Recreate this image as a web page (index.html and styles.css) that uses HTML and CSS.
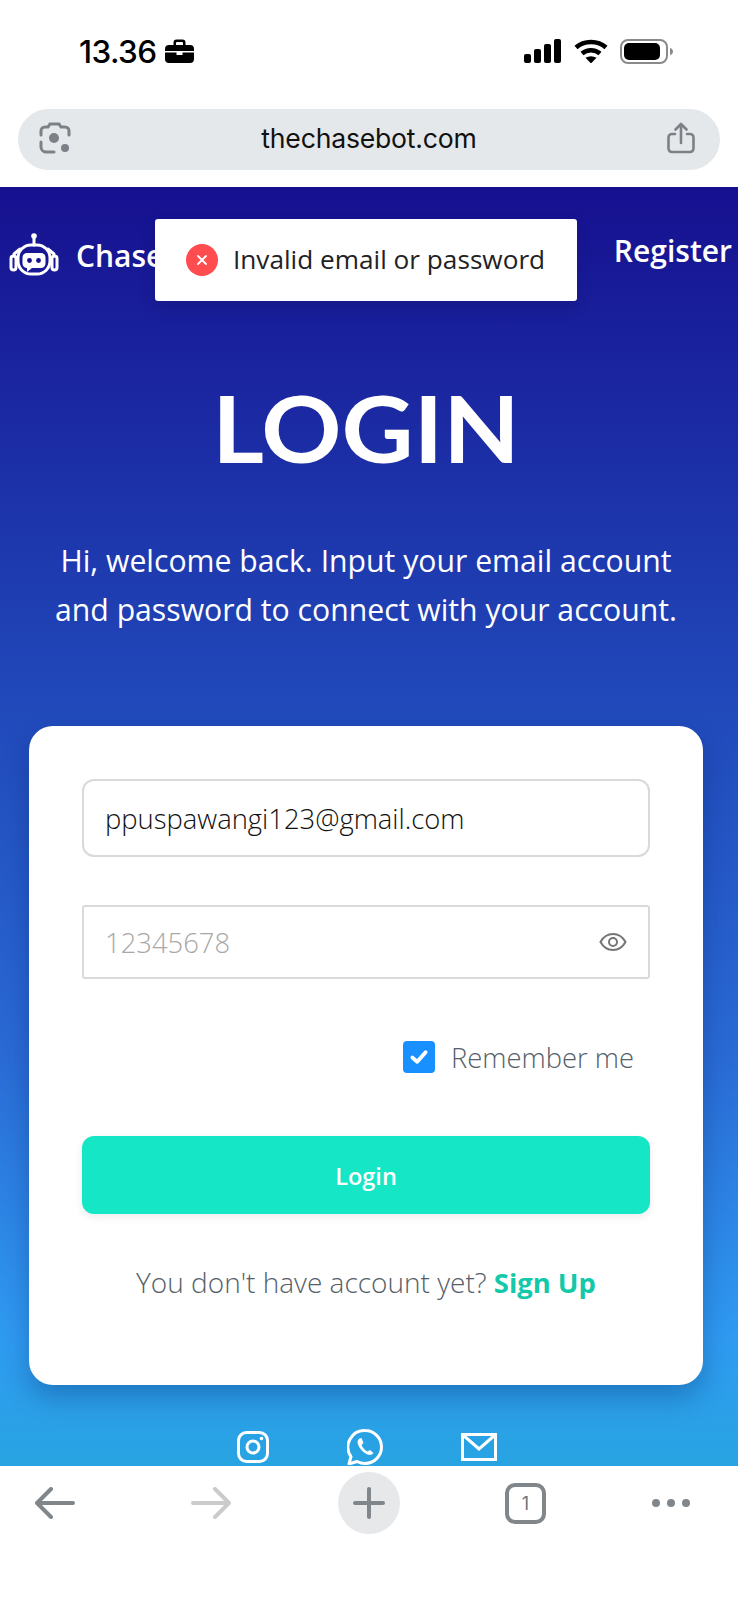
FILE: index.html
```html
<!DOCTYPE html>
<html lang="en">
<head>
<meta charset="utf-8">
<title>Login</title>
<link rel="stylesheet" href="styles.css">
</head>
<body>
<div class="phone">
  <header class="browser-top">
    <div class="status">
      <div class="status-left">
        <span class="time">13.36</span>
        <svg class="briefcase" viewBox="0 0 29 24"><path d="M8.500 6V3.500A3 3 0 0 1 11.500.5h6a3 3 0 0 1 3 3V6H25a4 4 0 0 1 4 4v2H0v-2a4 4 0 0 1 4-4zm2.500-2v2h7V4a1 1 0 0 0-1-1h-5a1 1 0 0 0-1 1zM0 13.500h11.500v2.500h6v-2.500H29V20a4 4 0 0 1-4 4H4a4 4 0 0 1-4-4z" fill="#000" fill-rule="evenodd"/></svg>
      </div>
      <div class="status-right">
        <svg class="signal" viewBox="0 0 37 24"><rect x="0" y="15" width="7" height="9" rx="2"/><rect x="10" y="10" width="7" height="14" rx="2"/><rect x="20" y="5" width="7" height="19" rx="2"/><rect x="30" y="0" width="7" height="24" rx="2"/></svg>
        <svg class="wifi" viewBox="0 0 34 24" fill="none" stroke="#000" stroke-width="4.500"><path d="M2 8.500C10 1 24 1 32 8.500"/><path d="M8 14.500C13 10 21 10 26 14.500"/><path d="M11.500 18.800C15 16.800 19 16.800 22.500 18.800L17 24.500z" fill="#000" stroke="none"/></svg>
        <svg class="battery" viewBox="0 0 53 25"><rect x="1" y="1" width="46" height="23" rx="7" fill="none" stroke="#8a8a8a" stroke-width="2"/><rect x="4" y="4" width="36" height="17" rx="5" fill="#000"/><path d="M50 9c2 .5 3 2 3 3.500s-1 3-3 3.500z" fill="#8a8a8a"/></svg>
      </div>
    </div>
    <div class="urlbar">
      <svg class="lens" viewBox="0 0 32 32" fill="none" stroke="#7b8186" stroke-width="3" stroke-linecap="round"><path d="M2 13V9a4 4 0 0 1 4-4h3l2-3h9l2 3h4a4 4 0 0 1 4 4v4"/><path d="M2 20v5a5 5 0 0 0 5 5h8"/><circle cx="15" cy="16" r="5" fill="#7b8186" stroke="none"/><circle cx="26" cy="26" r="4" fill="#7b8186" stroke="none"/></svg>
      <span class="url">thechasebot.com</span>
      <svg class="share" viewBox="0 0 28 32" fill="none" stroke="#7b8186" stroke-width="2.600" stroke-linecap="round" stroke-linejoin="round"><path d="M14 21V2M8.500 7.500 14 2l5.500 5.500"/><path d="M8 12H5a3.500 3.500 0 0 0-3.500 3.500v11A3.500 3.500 0 0 0 5 30h18a3.500 3.500 0 0 0 3.500-3.500v-11A3.500 3.500 0 0 0 23 12h-3"/></svg>
    </div>
  </header>

  <main class="page">
    <div class="toast">
      <span class="toast-icon"><svg viewBox="0 0 12 12" fill="none" stroke="#fff" stroke-width="1.800" stroke-linecap="round"><path d="M2 2l8 8M10 2l-8 8"/></svg></span>
      <span class="toast-text">Invalid email or password</span>
    </div>
    <nav class="nav">
      <a class="brand">
        <svg class="robot" viewBox="0 0 50 50" fill="none" stroke="#fff" stroke-width="3" stroke-linecap="round" stroke-linejoin="round"><circle cx="25" cy="5" r="2.800" fill="#fff" stroke="none"/><path d="M25 7v7"/><rect x="9" y="14" width="32" height="29" rx="13"/><rect x="2" y="25" width="5" height="14" rx="2.500"/><rect x="43" y="25" width="5" height="14" rx="2.500"/><path d="M5 25v-2l6-5M45 25v-2l-6-5"/><path d="M18 22h14a4.500 4.500 0 0 1 4.500 4.500v6A4.500 4.500 0 0 1 32 37H23l-5 4v-4a4.500 4.500 0 0 1-4.500-4.500v-6A4.500 4.500 0 0 1 18 22z" fill="#fff" stroke="none"/><circle cx="20.500" cy="29.500" r="2.400" fill="#16108f" stroke="none"/><circle cx="29.500" cy="29.500" r="2.400" fill="#16108f" stroke="none"/></svg>
        <span>ChaseBot</span>
      </a>
      <a class="register">Register</a>
    </nav>
    <h1 class="title">LOGIN</h1>
    <p class="intro">Hi, welcome back. Input your email account<br>and password to connect with your account.</p>

    <section class="card">
      <div class="field field-email">ppuspawangi123@gmail.com</div>
      <div class="field field-pass">
        <span class="placeholder">12345678</span>
        <svg class="eye" viewBox="0 0 28 20" fill="none" stroke="#757575" stroke-width="2"><path d="M1.500 10C4.500 4.500 9 2 14 2s9.500 2.500 12.500 8C23.500 15.500 19 18 14 18S4.500 15.500 1.500 10z"/><circle cx="14" cy="10" r="4"/></svg>
      </div>
      <label class="remember">
        <span class="check"><svg viewBox="0 0 20 20" fill="none" stroke="#fff" stroke-width="3.200" stroke-linecap="round" stroke-linejoin="round"><path d="M4.500 10.500l4 3.500 7-8"/></svg></span>
        <span>Remember me</span>
      </label>
      <button class="login-btn">Login</button>
      <p class="signup">You don't have account yet? <strong>Sign Up</strong></p>
    </section>

    <div class="social">
      <svg class="ig" viewBox="0 0 32 32" fill="none" stroke="#fff" stroke-width="3"><rect x="1.500" y="1.500" width="29" height="29" rx="8"/><circle cx="16" cy="16" r="6"/><circle cx="24.500" cy="7.500" r="1.800" fill="#fff" stroke="none"/></svg>
      <svg class="wa" viewBox="0 0 36 36" fill="none" stroke="#fff" stroke-width="3" stroke-linejoin="round"><path d="M18 1.500a16.500 16.500 0 0 1 0 33c-3 0-5.500-.7-8-2l-8 2.500 2-7.500A16.500 16.500 0 0 1 18 1.500z"/><path d="M12.500 9.500c-2 1.500-2.500 3.500-1.500 6 1.500 4 5 8 9.500 10 2.500 1 4.500.5 6-1.500l-3.500-3-2.500 1.500c-2.500-1-5-4-6-6.500l2-2-2-5z" fill="#fff" stroke="none"/></svg>
      <svg class="mail" viewBox="0 0 36 28" fill="none" stroke="#fff" stroke-width="3"><rect x="1.500" y="1.500" width="33" height="25"/><path d="M2 2l16 14L34 2"/></svg>
    </div>
  </main>

  <footer class="toolbar">
    <svg class="tool-arrow" viewBox="0 0 40 32" fill="none" stroke="#80868a" stroke-width="4" stroke-linecap="round" stroke-linejoin="round"><path d="M38 16H3M16 2 2 16l14 14"/></svg>
    <svg class="tool-arrow tool-forward" viewBox="0 0 40 32" fill="none" stroke="#c9cbcc" stroke-width="4" stroke-linecap="round" stroke-linejoin="round"><path d="M2 16h35M24 2l14 14-14 14"/></svg>
    <span class="plus-btn"><svg viewBox="0 0 32 32" fill="none" stroke="#80868a" stroke-width="4" stroke-linecap="round"><path d="M16 2v28M2 16h28"/></svg></span>
    <span class="tabs">1</span>
    <svg class="more" viewBox="0 0 40 10" fill="#80868a"><circle cx="5" cy="5" r="4"/><circle cx="20" cy="5" r="4"/><circle cx="35" cy="5" r="4"/></svg>
  </footer>
</div>
</body>
</html>
```

FILE: styles.css
```css
* { box-sizing: border-box; }
html, body { margin: 0; padding: 0; background: #fff; }
body { font-family: "Open Sans", "Noto Sans", sans-serif; }
.phone { width: 738px; height: 1600px; overflow: hidden; display: flex; flex-direction: column; }

.browser-top { height: 187px; flex: none; background: #fff; padding-top: 33px; }
.status { height: 36px; display: flex; justify-content: space-between; align-items: center; padding: 0 65px 0 79px; }
.status-left, .status-right { display: flex; align-items: center; }
.time { font-family: Inter, "Liberation Sans", sans-serif; font-size: 31.5px; font-weight: 500; letter-spacing: -0.6px; color: #000; }
.briefcase { width: 29px; height: 24px; margin-left: 9px; }
.signal { width: 37px; height: 24px; fill: #000; }
.wifi { width: 34px; height: 24px; margin-left: 13px; }
.battery { width: 53px; height: 25px; margin-left: 12px; }
.urlbar { height: 61px; margin: 40px 18px 0; border-radius: 31px; background: #e5e8eb; display: flex; align-items: center; justify-content: space-between; padding: 0 25px 4px 21px; }
.lens { width: 32px; height: 32px; }
.share { width: 28px; height: 32px; }
.url { font-family: Inter, "Liberation Sans", sans-serif; font-size: 26.6px; color: #111; letter-spacing: -0.2px; }

.page { position: relative; height: 1279px; flex: none; overflow: hidden; background: linear-gradient(180deg, #16108f 0%, #2046b8 38%, #2a6bd6 68%, #2f9bf2 90%, #28a4e2 100%); padding: 0 35px 0 29px; }
.toast { position: absolute; left: 155px; top: 32px; width: 422px; height: 82px; background: #fff; border-radius: 3px; display: flex; align-items: center; padding-left: 31px; box-shadow: 0 6px 16px rgba(0, 0, 0, .12); z-index: 2; }
.toast-icon { width: 32px; height: 32px; border-radius: 50%; background: #ff4d4f; display: flex; align-items: center; justify-content: center; }
.toast-icon svg { width: 12px; height: 12px; }
.toast-text { margin-left: 15px; padding-bottom: 2px; font-size: 26.2px; color: #222; }
.nav { display: flex; justify-content: space-between; margin: 0 -29px 0 -20px; padding-top: 39px; height: 96px; color: #fff; }
.brand { display: flex; align-items: flex-start; font-size: 30px; font-weight: 600; line-height: 50px; padding-top: 5px; }
.robot { width: 50px; height: 50px; margin-right: 17px; }
.register { font-size: 30px; font-weight: 600; line-height: 50px; }
.title { margin: 95px 0 0; height: 100px; text-align: center; font-family: Lato, Inter, sans-serif; font-size: 92px; line-height: 100px; font-weight: 700; color: #fff; transform: scaleX(1.08); }
.intro { margin: 58px -10px 0; text-align: center; color: #fff; font-size: 30.2px; line-height: 49px; }

.card { margin-top: 92px; height: 659px; background: #fff; border-radius: 24px; box-shadow: 0 12px 28px rgba(0, 30, 90, .3); padding: 53px 53px 0; }
.field { display: flex; align-items: center; justify-content: space-between; border: 2px solid #d9d9d9; padding: 0 21px; font-size: 27.4px; background: #fff; }
.field-email { height: 78px; border-radius: 12px; font-weight: 300; color: #111; }
.field-pass { height: 74px; margin-top: 48px; border-radius: 3px; }
.placeholder { color: #a8a8a8; font-weight: 300; }
.eye { width: 28px; height: 20px; }
.remember { display: flex; align-items: center; justify-content: flex-end; margin-top: 62px; padding-right: 16px; font-size: 27.4px; font-weight: 300; color: #566069; height: 32px; }
.check { width: 32px; height: 32px; border-radius: 4px; background: #1890ff; margin-right: 16px; display: flex; align-items: center; justify-content: center; }
.check svg { width: 24px; height: 24px; }
.login-btn { display: block; width: 100%; height: 78px; margin-top: 63px; padding: 2px 0 0; border: 0; border-radius: 12px; background: #15e6c6; color: #fff; font-family: inherit; font-size: 23.5px; font-weight: 600; box-shadow: 0 3px 8px rgba(0, 0, 0, .08); }
.signup { margin: 49px 0 0; text-align: center; font-size: 28px; font-weight: 300; color: #566069; }
.signup strong { font-size: 27.4px; font-weight: 700; color: #14c8aa; }

.social { display: flex; justify-content: center; gap: 78px; margin: 44px -35px 0 -29px; padding-right: 5px; align-items: center; }
.ig { width: 32px; height: 32px; }
.wa { width: 36px; height: 36px; }
.mail { width: 36px; height: 28px; }

.toolbar { flex: 1; background: #fff; display: flex; align-items: flex-start; padding: 6px 0 0 35px; }
.tool-arrow { width: 40px; height: 32px; margin-top: 15px; }
.tool-forward { margin-left: 116px; }
.plus-btn { width: 62px; height: 62px; margin-left: 107px; border-radius: 50%; background: #e7e8ea; display: flex; align-items: center; justify-content: center; }
.plus-btn svg { width: 32px; height: 32px; }
.tabs { width: 41px; height: 41px; margin: 11px 0 0 105px; border: 4px solid #80868a; border-radius: 10px; display: flex; align-items: center; justify-content: center; font-family: Inter, sans-serif; font-size: 18px; color: #70767a; }
.more { width: 40px; height: 10px; margin: 26px 0 0 105px; }
```
